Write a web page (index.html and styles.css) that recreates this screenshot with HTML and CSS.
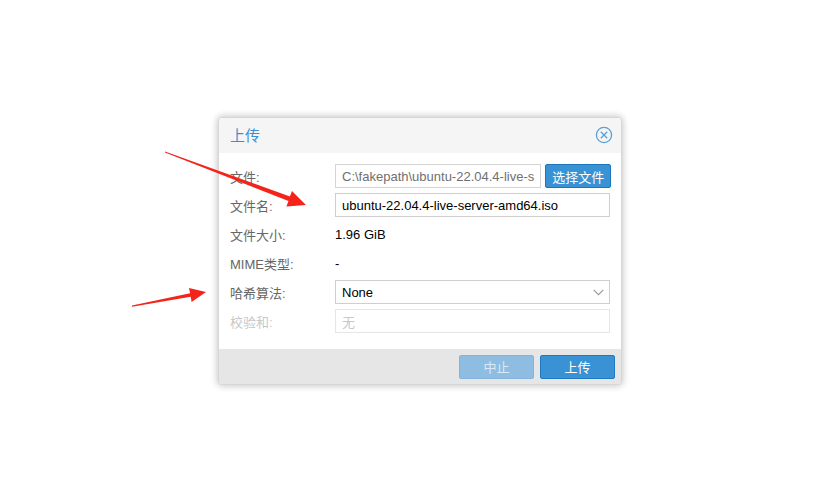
FILE: index.html
```html
<!DOCTYPE html>
<html lang="zh">
<head>
<meta charset="utf-8">
<title>上传</title>
<link rel="stylesheet" href="styles.css">
</head>
<body>
<div class="dialog">
  <div class="dlg-header">
    <span class="dlg-title">上传</span>
    <span class="dlg-close">
      <svg width="18" height="18" viewBox="0 0 18 18">
        <circle cx="9" cy="9" r="7.6" fill="none" stroke="#5a9fd6" stroke-width="1.3"/>
        <path d="M5.8 5.8 L12.2 12.2 M12.2 5.8 L5.8 12.2" stroke="#5a9fd6" stroke-width="1.3" fill="none"/>
      </svg>
    </span>
  </div>
  <div class="dlg-body">
    <div class="row">
      <span class="label">文件:</span>
      <div class="field file-field">
        <span class="input input-file">C:\fakepath\ubuntu-22.04.4-live-s</span>
        <span class="btn-pick">选择文件</span>
      </div>
    </div>
    <div class="row">
      <span class="label">文件名:</span>
      <span class="field input">ubuntu-22.04.4-live-server-amd64.iso</span>
    </div>
    <div class="row">
      <span class="label">文件大小:</span>
      <span class="field value">1.96 GiB</span>
    </div>
    <div class="row">
      <span class="label">MIME类型:</span>
      <span class="field value">-</span>
    </div>
    <div class="row">
      <span class="label">哈希算法:</span>
      <span class="field input select">None
        <svg class="chev" width="11" height="7" viewBox="0 0 11 7"><path d="M0.7 0.8 L5.5 5.6 L10.3 0.8" fill="none" stroke="#999" stroke-width="1.2"/></svg>
      </span>
    </div>
    <div class="row disabled">
      <span class="label">校验和:</span>
      <span class="field input input-disabled">无</span>
    </div>
  </div>
  <div class="dlg-footer">
    <span class="btn btn-off">中止</span>
    <span class="btn btn-primary">上传</span>
  </div>
</div>
<svg class="arrows" width="818" height="482" viewBox="0 0 818 482">
  <polygon fill="#f4241b" points="165,151.6 289.9,196.4 292,191 306,205 286.4,206.4 288.5,200.9 165,152.5"/>
  <polygon fill="#f4241b" points="132,305.5 190.1,293.2 189,288 206,292 191.6,302 190.7,296.8 132,306.7"/>
</svg>
</body>
</html>
```
FILE: styles.css
```css
html, body {
  margin: 0;
  padding: 0;
  background: #ffffff;
}
body {
  width: 818px;
  height: 482px;
  overflow: hidden;
  font-family: "Liberation Sans", "Noto Sans CJK SC", Arial, sans-serif;
  font-size: 13px;
  position: relative;
}
.dialog {
  margin-left: 218px;
  margin-top: 117px;
  width: 402px;
  border: 1px solid #d6d6d6;
  border-radius: 4px;
  background: #f5f5f5;
  box-shadow: 0 0 7px 1px rgba(0,0,0,0.22);
  display: flex;
  flex-direction: column;
  overflow: hidden;
}
.dlg-header {
  height: 35px;
  display: flex;
  align-items: center;
  justify-content: space-between;
  padding: 0 8px 0 11px;
  background: #f5f5f5;
}
.dlg-title {
  color: #3b8fd1;
  font-size: 15px;
  margin-top: -3px;
}
.dlg-close {
  display: flex;
  margin-top: -1px;
}
.dlg-body {
  background: #ffffff;
  padding: 11px 11px 16px 11px;
  display: flex;
  flex-direction: column;
  gap: 5px;
}
.row {
  height: 24px;
  display: flex;
  align-items: center;
}
.label {
  width: 105px;
  flex: none;
  color: #666666;
}
.disabled .label {
  color: #c8c8c8;
}
.field {
  flex: 1;
  height: 24px;
  box-sizing: border-box;
}
.file-field {
  display: flex;
  gap: 4px;
}
.input {
  display: flex;
  align-items: center;
  border: 1px solid #cfcfcf;
  padding: 0 6px;
  color: #000000;
  background: #ffffff;
  white-space: nowrap;
  overflow: hidden;
}
.input-file {
  flex: 1;
  color: #6f6f6f;
  border-color: #d4d4d4;
}
.btn-pick {
  width: 66px;
  flex: none;
  box-sizing: border-box;
  height: 24px;
  background: #3892d4;
  border: 1px solid #1c76be;
  border-radius: 2px;
  color: #ffffff;
  display: flex;
  align-items: center;
  justify-content: center;
}
.value {
  display: flex;
  align-items: center;
  color: #000000;
  padding-left: 0;
}
.select {
  justify-content: space-between;
  padding-right: 5px;
}
.chev {
  display: block;
}
.input-disabled {
  border-color: #e6e6e6;
  color: #c8c8c8;
}
.dlg-footer {
  height: 35px;
  background: #e6e6e6;
  display: flex;
  align-items: center;
  justify-content: flex-end;
  gap: 6px;
  padding: 0 6px;
}
.btn {
  width: 75px;
  height: 24px;
  box-sizing: border-box;
  border-radius: 2px;
  display: flex;
  align-items: center;
  justify-content: center;
  font-size: 13px;
}
.btn-off {
  background: #8fbde1;
  border: 1px solid #82b4dd;
  color: #d8eaf7;
}
.btn-primary {
  background: #3892d4;
  border: 1px solid #1f7ac3;
  color: #ffffff;
}
.arrows {
  position: absolute;
  left: 0;
  top: 0;
  pointer-events: none;
}
```
